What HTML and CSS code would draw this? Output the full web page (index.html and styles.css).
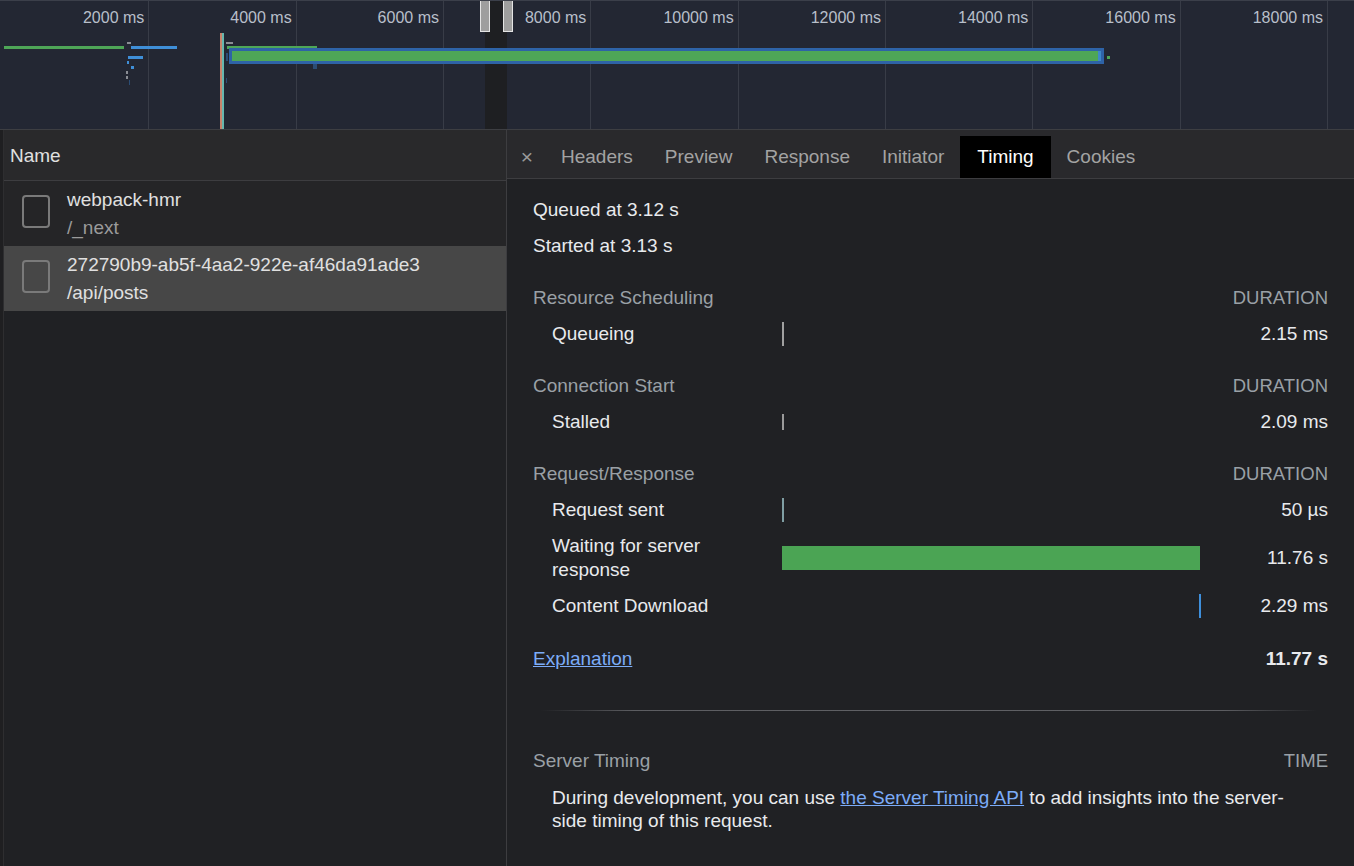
FILE: index.html
```html
<!DOCTYPE html>
<html>
<head>
<meta charset="utf-8">
<link rel="stylesheet" href="styles.css">
</head>
<body>
<div class="overview">
  <div class="ticks">
    <div class="tick">2000 ms</div>
    <div class="tick">4000 ms</div>
    <div class="tick">6000 ms</div>
    <div class="tick">8000 ms</div>
    <div class="tick">10000 ms</div>
    <div class="tick">12000 ms</div>
    <div class="tick">14000 ms</div>
    <div class="tick">16000 ms</div>
    <div class="tick">18000 ms</div>
  </div>
  <div class="selection"></div>
  <div class="b green" style="left:4px;top:45px;width:120px;height:3px"></div>
  <div class="b grey" style="left:127px;top:41px;width:4px;height:2px"></div>
  <div class="b blue" style="left:131px;top:45px;width:46px;height:3px"></div>
  <div class="b blue" style="left:128px;top:55px;width:15px;height:3px"></div>
  <div class="b blue" style="left:127px;top:60px;width:2px;height:3px"></div>
  <div class="b blue" style="left:131px;top:65px;width:3px;height:3px"></div>
  <div class="b grey" style="left:126px;top:70px;width:2px;height:3px"></div>
  <div class="b grey" style="left:126px;top:75px;width:2px;height:3px"></div>
  <div class="b dim" style="left:129px;top:79px;width:1px;height:5px"></div>
  <div class="b orange" style="left:220px;top:32px;width:2px;height:100px"></div>
  <div class="b teal" style="left:222px;top:32px;width:2px;height:100px"></div>
  <div class="b grey" style="left:226px;top:41px;width:7px;height:2px"></div>
  <div class="b green" style="left:227px;top:45px;width:90px;height:3px"></div>
  <div class="b dim" style="left:226px;top:52px;width:2px;height:8px"></div>
  <div class="b dim" style="left:226px;top:77px;width:1px;height:5px"></div>
  <div class="b dim" style="left:313px;top:63px;width:4px;height:5px"></div>
  <div class="b big" style="left:229px;top:47px;width:875px;height:16px"></div>
  <div class="b green" style="left:1107px;top:55px;width:3px;height:3px"></div>
  <div class="handle" style="left:480px"></div>
  <div class="handle" style="left:503px"></div>
</div>

<div class="main">
  <div class="list">
    <div class="list-inner">
      <div class="list-head">Name</div>
      <div class="req">
        <div class="doc"></div>
        <div class="req-text">
          <div>webpack-hmr</div>
          <div class="sub">/_next</div>
        </div>
      </div>
      <div class="req selected">
        <div class="doc"></div>
        <div class="req-text">
          <div>272790b9-ab5f-4aa2-922e-af46da91ade3</div>
          <div>/api/posts</div>
        </div>
      </div>
    </div>
  </div>

  <div class="detail">
    <div class="tabs">
      <div class="close">×</div>
      <div class="tab first">Headers</div>
      <div class="tab">Preview</div>
      <div class="tab">Response</div>
      <div class="tab">Initiator</div>
      <div class="tab active">Timing</div>
      <div class="tab">Cookies</div>
    </div>

    <div class="timing">
      <div class="line">Queued at 3.12 s</div>
      <div class="line">Started at 3.13 s</div>

      <div class="section">
        <div class="sec-head"><span>Resource Scheduling</span><span class="dur">DURATION</span></div>
        <div class="row">
          <div class="lbl">Queueing</div>
          <div class="bar"><span class="mark queue"></span></div>
          <div class="val">2.15 ms</div>
        </div>
      </div>

      <div class="section">
        <div class="sec-head"><span>Connection Start</span><span class="dur">DURATION</span></div>
        <div class="row">
          <div class="lbl">Stalled</div>
          <div class="bar"><span class="mark stall"></span></div>
          <div class="val">2.09 ms</div>
        </div>
      </div>

      <div class="section">
        <div class="sec-head"><span>Request/Response</span><span class="dur">DURATION</span></div>
        <div class="row">
          <div class="lbl">Request sent</div>
          <div class="bar"><span class="mark sent"></span></div>
          <div class="val">50 µs</div>
        </div>
        <div class="row">
          <div class="lbl">Waiting for server response</div>
          <div class="bar"><span class="wait"></span></div>
          <div class="val">11.76 s</div>
        </div>
        <div class="row">
          <div class="lbl">Content Download</div>
          <div class="bar end"><span class="mark download"></span></div>
          <div class="val">2.29 ms</div>
        </div>
      </div>

      <div class="total">
        <a class="link" href="#">Explanation</a>
        <span class="strong">11.77 s</span>
      </div>

      <div class="divider"></div>

      <div class="sec-head server"><span>Server Timing</span><span class="dur">TIME</span></div>
      <p class="desc">During development, you can use <a class="link" href="#">the Server Timing API</a> to add insights into the server-side timing of this request.</p>
    </div>
  </div>
</div>
</body>
</html>
```

FILE: styles.css
```css
html, body {
  margin: 0;
  height: 100%;
}
body {
  background: #202124;
  color: #e8eaed;
  font-family: "Liberation Sans", Arial, sans-serif;
  overflow: hidden;
}

/* ---------- overview ---------- */
.overview {
  position: relative;
  height: 128px;
  background: #232733;
  border-top: 1px solid #3b3f4a;
  border-bottom: 1px solid #3d3e42;
  overflow: hidden;
}
.ticks {
  display: flex;
  height: 100%;
  padding-left: 2px;
}
.tick {
  flex: 0 0 147.33px;
  box-sizing: border-box;
  border-right: 1px solid #383c47;
  text-align: right;
  padding-right: 4px;
  font-size: 16px;
  line-height: 34px;
  color: #b8bfca;
}
.selection {
  position: absolute;
  left: 485px;
  width: 22px;
  top: 0;
  bottom: 0;
  background: #1e1f22;
}
.handle {
  position: absolute;
  top: -1px;
  width: 8px;
  height: 31px;
  background: #9e9e9e;
  border: 1px solid #e4e4e4;
  border-top: none;
}
.b { position: absolute; }
.green { background: #4ea657; }
.blue { background: #3f8fd8; }
.grey { background: #8a8d94; }
.dim { background: #2b4d75; }
.orange { background: #c8836b; }
.teal { background: #66b7ae; }
.big {
  box-sizing: border-box;
  background: #4ea657;
  border: 3px solid #2e63a7;
  box-shadow: inset -3px 0 0 #3f88c8;
}

/* ---------- main ---------- */
.main {
  display: flex;
  height: calc(100% - 130px);
}
.list {
  flex: 0 0 507px;
  box-sizing: border-box;
  padding-left: 3px;
  background: #1f1f21;
  border-right: 1px solid #3d3d40;
}
.list-inner {
  height: 100%;
  background: #202124;
  border-left: 1px solid #2e2e30;
}
.list-head {
  height: 48px;
  padding-top: 2px;
  line-height: 48px;
  padding-left: 6px;
  background: #29292b;
  border-bottom: 1px solid #3d3d40;
  font-size: 19px;
  color: #e0e0e0;
}
.req {
  display: flex;
  height: 65px;
  background: #252527;
}
.req.selected {
  background: #474747;
}
.doc {
  flex: 0 0 auto;
  width: 28px;
  height: 33px;
  box-sizing: border-box;
  border: 2px solid #7a7a7a;
  border-radius: 4px;
  margin: 14px 0 0 18px;
}
.req-text {
  margin-left: 17px;
  padding-top: 5px;
  font-size: 19px;
  line-height: 28px;
  color: #e0e0e0;
}
.req-text .sub {
  color: #9b9b9b;
}

/* ---------- detail ---------- */
.detail {
  flex: 1;
  display: flex;
  flex-direction: column;
}
.tabs {
  display: flex;
  align-items: flex-end;
  height: 48px;
  padding-left: 8px;
  background: #29292c;
  border-bottom: 1px solid #3d3d40;
}
.close {
  width: 24px;
  line-height: 42px;
  text-align: center;
  font-size: 21px;
  color: #9a9a9a;
}
.tab {
  padding: 0 16px;
  line-height: 42px;
  font-size: 19px;
  color: #a3a3a3;
}
.tab.first { margin-left: 6px; }
.tab.active {
  background: #000;
  color: #fff;
  padding: 0 17px;
}

.timing {
  padding: 13px 26px 0;
  font-size: 19px;
}
.line {
  height: 36px;
  line-height: 36px;
}
.section {
  margin-top: 16px;
}
.sec-head {
  display: flex;
  justify-content: space-between;
  height: 36px;
  line-height: 36px;
  color: #9aa0a6;
}
.dur {
  font-size: 18.5px;
}
.row {
  display: grid;
  grid-template-columns: 249px 418px 1fr;
  align-items: center;
  padding: 6px 0;
  line-height: 24px;
}
.lbl {
  padding-left: 19px;
  padding-right: 24px;
}
.bar {
  display: flex;
  align-items: center;
  height: 24px;
}
.bar.end {
  justify-content: flex-end;
}
.mark {
  width: 2px;
  height: 24px;
}
.mark.queue { background: #a0a0a0; }
.mark.stall { background: #9a9a9a; height: 16px; width: 1.5px; }
.mark.sent { background: #7f9ea3; }
.mark.download { background: #3e8fdb; margin-right: -1px; }
.wait {
  width: 418px;
  height: 24px;
  background: #4ba454;
}
.val {
  text-align: right;
}
.total {
  display: flex;
  justify-content: space-between;
  margin-top: 17px;
  height: 36px;
  line-height: 36px;
}
.strong {
  font-weight: bold;
}
.link {
  color: #7cacf8;
  text-decoration: underline;
}
.divider {
  height: 1px;
  margin: 33px 11px 0 8px;
  background: linear-gradient(90deg, rgba(120,120,124,0) 0%, #5c5d61 12%, #606165 50%, #5c5d61 88%, rgba(120,120,124,0) 100%);
}
.sec-head.server {
  margin-top: 32px;
}
.desc {
  margin: 0;
  padding: 7px 28px 0 19px;
  line-height: 23px;
}
```
